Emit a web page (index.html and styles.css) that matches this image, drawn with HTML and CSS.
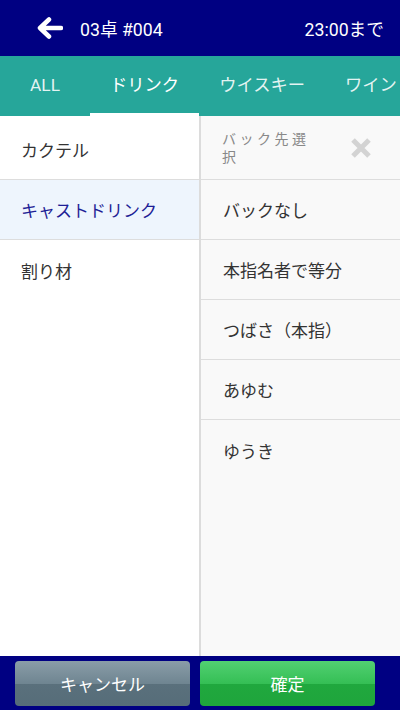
FILE: index.html
```html
<!DOCTYPE html>
<html lang="ja">
<head>
<meta charset="utf-8">
<link rel="stylesheet" href="styles.css">
</head>
<body>
<div class="app">
  <header class="topbar">
    <svg class="back" width="26" height="22" viewBox="0 0 26 22"><path d="M24 11H4M12 2.5L3 11l9 8.5" fill="none" stroke="#fff" stroke-width="4.5" stroke-linecap="round" stroke-linejoin="round"/></svg>
    <span class="title">03卓 #004</span>
    <span class="time">23:00まで</span>
  </header>
  <nav class="tabs">
    <div class="tab">ALL</div>
    <div class="tab active">ドリンク</div>
    <div class="tab">ウイスキー</div>
    <div class="tab">ワイン</div>
  </nav>
  <main class="main">
    <div class="cats">
      <div class="cat">カクテル</div>
      <div class="cat selected">キャストドリンク</div>
      <div class="cat last">割り材</div>
    </div>
    <div class="divider"></div>
    <div class="panel">
      <div class="phead">
        <span class="ptitle">バック先選択</span>
        <svg class="close" width="22" height="22" viewBox="0 0 22 22"><path d="M3 3L19 19M19 3L3 19" stroke="#d3d3d3" stroke-width="5" stroke-linecap="butt"/></svg>
      </div>
      <div class="prow">バックなし</div>
      <div class="prow">本指名者で等分</div>
      <div class="prow">つばさ（本指）</div>
      <div class="prow">あゆむ</div>
      <div class="prow last">ゆうき</div>
    </div>
  </main>
  <footer class="footer">
    <button class="btn cancel">キャンセル</button>
    <button class="btn ok">確定</button>
  </footer>
</div>
</body>
</html>
```
FILE: styles.css
```css
* { box-sizing: border-box; }
html, body { margin: 0; padding: 0; }
body {
  width: 400px;
  height: 710px;
  overflow: hidden;
  font-family: Roboto, "Noto Sans CJK JP", sans-serif;
}
.app {
  display: flex;
  flex-direction: column;
  height: 710px;
}
.topbar {
  height: 56px;
  background: #000082;
  color: #fff;
  display: flex;
  align-items: center;
  padding: 0 16px 0 37px;
  flex-shrink: 0;
}
.back { margin-right: 17px; }
.title { font-size: 17.7px; flex: 1; }
.time { font-size: 17.7px; }
.tabs {
  height: 60px;
  background: #26a69a;
  display: flex;
  white-space: nowrap;
  overflow: hidden;
  flex-shrink: 0;
}
.tab {
  min-width: 90px;
  padding: 0 20px;
  height: 60px;
  text-align: center;
  color: rgba(255,255,255,0.88);
  font-size: 17.3px;
  flex-shrink: 0;
  border-bottom: 3px solid transparent;
  line-height: 58px;
}
.tab.active { color: #fff; border-bottom-color: #fff; }
.main {
  flex: 1;
  display: flex;
  min-height: 0;
}
.cats {
  width: 199px;
  background: #fff;
  padding-top: 4px;
}
.cat {
  height: 60px;
  padding-left: 21px;
  display: flex;
  align-items: center;
  font-size: 17px;
  color: #333;
  border-bottom: 1px solid #dddddd;
}
.cat.selected { background: #eef5fd; color: #1e1e96; }
.cat.last { border-bottom: none; }
.divider { width: 2px; background: #dcdcdc; }
.panel {
  flex: 1;
  background: #f9f9f9;
  padding-top: 4px;
}
.phead {
  height: 60px;
  display: flex;
  align-items: center;
  justify-content: space-between;
  padding: 0 28px 0 21px;
  border-bottom: 1px solid #dddddd;
}
.ptitle {
  width: 100px;
  font-size: 14px;
  letter-spacing: 3.5px;
  line-height: 18px;
  color: #888;
  margin-top: -4px;
}
.close { margin-top: -4px; }
.prow {
  height: 60px;
  padding-left: 22px;
  display: flex;
  align-items: center;
  font-size: 17px;
  color: #333;
  border-bottom: 1px solid #dddddd;
}
.prow.last { border-bottom: none; }
.footer {
  height: 54px;
  background: #000082;
  display: flex;
  gap: 10px;
  padding: 5px 15px 4px;
  flex-shrink: 0;
}
.btn {
  width: 175px;
  height: 45px;
  border: none;
  border-radius: 4px;
  color: #fff;
  font-size: 17px;
  font-family: Roboto, "Noto Sans CJK JP", sans-serif;
  padding: 0;
}
.cancel {
  background: linear-gradient(to bottom, #8a9da8 0%, #6f8591 50%, #5a707c 51%, #566d79 100%);
}
.ok {
  background: linear-gradient(to bottom, #52d072 0%, #35bf55 50%, #20a83e 51%, #1fa53c 100%);
}
```
